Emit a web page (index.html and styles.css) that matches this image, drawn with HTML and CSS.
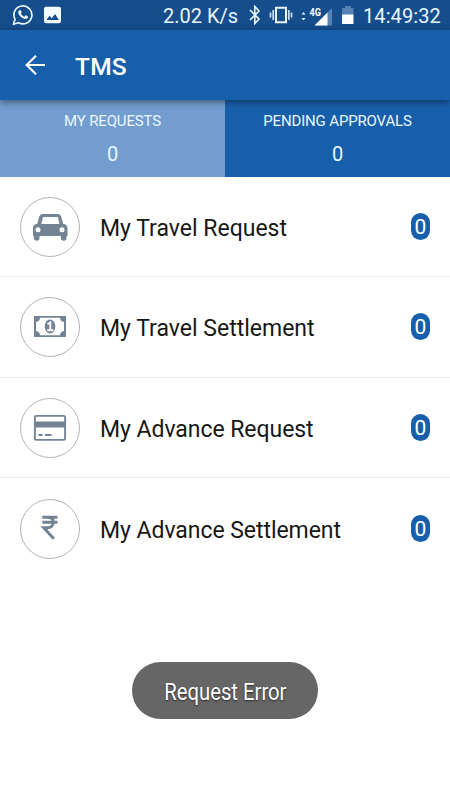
FILE: index.html
```html
<!DOCTYPE html>
<html lang="en">
<head>
<meta charset="utf-8">
<title>TMS</title>
<link rel="stylesheet" href="styles.css">
</head>
<body>
<div class="statusbar">
  <svg class="whatsapp" width="22" height="22" viewBox="0 0 22 22"><path d="M1.5 20.3 3 15.2A9 9 0 1 1 6.6 18.8Z" fill="none" stroke="#e9f7ff" stroke-width="1.7" stroke-linejoin="round"/><path d="M7.5 6.2c.7-.5 1.2-.3 1.5.4l.6 1.5c.2.5-.4 1.1-.7 1.5.7 1.5 1.8 2.5 3.3 3.1l1.1-1.2c.3-.3.6-.2.9-.1l1.500.8c.5.3.5.5.3 1.100-.5 1.400-1.800 2-3.300 1.600-3.400-.9-5.900-3.300-6.500-6.200-.2-1.100.4-2 1.300-2.500Z" fill="#e9f7ff"/></svg>
  <svg class="picture" width="18" height="18" viewBox="0 0 18 18"><path fill="#f4fbff" fill-rule="evenodd" d="M2 .8h13q2 0 2 2v12.400q0 2-2 2H2q-2 0-2-2V2.800q0-2 2-2ZM2.500 14h12.500l-4-6-3.200 4.200L5.500 9.800Z"/></svg>
  <span class="speed">2.02 K/s</span>
  <svg class="bluetooth" width="12" height="20" viewBox="0 0 12 20"><path d="m1 5 9 9-4.200 4.500V1.500L10 6l-9 9" fill="none" stroke="#e9f7ff" stroke-width="1.600"/></svg>
  <svg class="vibrate" width="24" height="18" viewBox="0 0 24 18"><path d="M7 1.700h10v14.600H7z" fill="none" stroke="#e9f7ff" stroke-width="2"/><path d="M4.200 4v10M19.800 4v10M1.500 6.500v5M22.500 6.500v5" stroke="#c9e0f2" stroke-width="1.700"/></svg>
  <svg class="signal" width="32" height="22" viewBox="0 0 32 22"><path d="M31 3v17.500H13.500Z" fill="#5681b4"/><path d="M26.500 7.500v13h-13Z" fill="#fff"/><path d="m.5 9.500 2-2.500 2 2.500ZM.5 13l2 2.500 2-2.500Z" fill="#e9f7ff"/><text x="8.500" y="10.500" textLength="11.500" lengthAdjust="spacingAndGlyphs">4G</text></svg>
  <svg class="battery" width="14" height="20" viewBox="0 0 14 20"><path d="M4 1h6v2h2.500v7H1V3h3Z" fill="#5681b4"/><path d="M1 9.500h11.500V19H1Z" fill="#fff"/></svg>
  <span class="clock">14:49:32</span>
</div>
<header class="appbar">
  <svg width="22" height="22" viewBox="0 0 22 22"><path d="M20 11H2M11 1.700 1.700 11 11 20.300" fill="none" stroke="#fff" stroke-width="2.200"/></svg>
  <h1>TMS</h1>
</header>
<nav class="tabs">
  <div class="tab selected"><span class="label">MY REQUESTS</span><span class="count">0</span></div>
  <div class="tab"><span class="label">PENDING APPROVALS</span><span class="count">0</span></div>
</nav>
<main>
  <div class="row">
    <div class="icon"><svg width="60" height="60" viewBox="0 0 60 60"><path fill="#748394" fill-rule="evenodd" d="M22.500 17h15q3 0 3.700 2.800l2 7.200q4.300.2 4.300 4.500v7.500H46.500v2a2.800 2.800 0 0 1-5.600 0v-2H19.500v2a2.800 2.800 0 0 1-5.600 0v-2H13v-7.500q0-4.300 4.200-4.500l2-7.200Q20 17 22.500 17ZM23 20l-1.700 7h18.200L38 20ZM18 30.200a2.500 2.500 0 1 0 0 5 2.500 2.500 0 1 0 0-5Zm24 0a2.500 2.500 0 1 0 0 5 2.500 2.500 0 1 0 0-5Z"/></svg></div>
    <span class="title">My Travel Request</span><span class="badge">0</span>
  </div>
  <div class="row">
    <div class="icon"><svg width="60" height="60" viewBox="0 0 60 60"><path fill="#748394" fill-rule="evenodd" d="M14 19h32v21H14ZM20 20.800q-.3 3.800-4 4.200v9q3.700.4 4 4.200h20q.3-3.800 4-4.200v-9q-3.700-.4-4-4.200Z"/><ellipse cx="30" cy="29.500" rx="5.300" ry="6.900" fill="#748394"/><path d="m27.500 27.200 2.800-1.700v7.700M27.200 33.200h6" fill="none" stroke="#fff" stroke-width="1.900"/></svg></div>
    <span class="title">My Travel Settlement</span><span class="badge">0</span>
  </div>
  <div class="row">
    <div class="icon"><svg width="60" height="60" viewBox="0 0 60 60"><rect x="14.900" y="17.900" width="30.200" height="24" rx="1.500" fill="none" stroke="#748394" stroke-width="1.900"/><path d="M14 23.500h32v6H14ZM18.500 36h4v2h-4ZM25 36h6.500v2H25Z" fill="#748394"/></svg></div>
    <span class="title tight">My Advance Request</span><span class="badge">0</span>
  </div>
  <div class="row">
    <div class="icon"><svg width="60" height="60" viewBox="0 0 60 60"><path d="M22.300 18.300h15.200M22.300 23.200h15.200M22.300 18.300h5c4 0 6 2 6 4.900 0 3.500-2.500 5.500-6 5.500h-3.500l10 11" fill="none" stroke="#748394" stroke-width="3"/></svg></div>
    <span class="title tight">My Advance Settlement</span><span class="badge">0</span>
  </div>
</main>
<div class="toast"><span>Request Error</span></div>
</body>
</html>
```

FILE: styles.css
```css
* { box-sizing: border-box; }
body { margin: 0; width: 450px; height: 800px; overflow: hidden; background: #fff; font-family: Roboto, "Liberation Sans", sans-serif; }
svg { display: block; flex: none; }
.statusbar { display: flex; height: 30px; align-items: center; background: #154d8d; color: #e9f7ff; font-size: 20px; line-height: 30px; white-space: nowrap; }
.statusbar > * { flex: none; }
.whatsapp { margin-left: 12px; }
.picture { margin-left: 10px; }
.speed { width: 76px; margin-left: 101px; padding-top: 2px; }
.bluetooth { margin-left: 10px; }
.vibrate { margin-left: 8px; }
.signal { margin: 2px 0 0 8px; }
.signal text { font-size: 10.500px; font-weight: 700; fill: #fff; }
.battery { margin-left: 8px; }
.clock { margin-left: 8px; padding-top: 2px; letter-spacing: .1px; }
.appbar { position: relative; z-index: 1; display: flex; align-items: center; height: 70px; padding-left: 25px; background: #185fab; color: #fff; box-shadow: 0 2px 7px rgba(0, 0, 0, .45); }
.appbar h1 { margin: 2px 0 0 28px; font-size: 24.500px; font-weight: 500; letter-spacing: .2px; }
.tabs { display: flex; height: 76.500px; }
.tab { flex: 1; display: flex; flex-direction: column; align-items: center; padding-top: 11px; background: #185fab; color: #e9f7ff; }
.selected { background: #729dce; }
.label { font-size: 15px; line-height: 21px; letter-spacing: -.15px; }
.count { margin-top: 10px; font-size: 20px; line-height: 24px; }
.row { display: flex; align-items: center; height: 100.500px; padding: 0 20px; border-bottom: 1px solid #ebebeb; }
.row:last-child { border-bottom: 0; }
.icon { flex: none; width: 60px; height: 60px; margin-top: 1px; border: 1px solid #b5b5b5; border-radius: 50%; }
.icon svg { margin: -1px; }
.title { margin: 5px 0 0 20px; color: #171717; font-size: 23px; line-height: 30px; white-space: nowrap; }
.tight { letter-spacing: -.05px; }
.badge { width: 19px; height: 27px; margin-left: auto; border-radius: 10px; background: #185fab; color: #fff; font-size: 21px; line-height: 29px; text-align: center; }
.toast { position: absolute; left: 132px; top: 662px; display: flex; align-items: center; justify-content: center; width: 186px; height: 57px; border-radius: 29px; background: #666; color: #fff; font-size: 23px; white-space: nowrap; }
.toast span { padding-top: 4px; transform: scaleX(.88); text-shadow: 0 1px 2px rgba(0, 0, 0, .65); }
```
